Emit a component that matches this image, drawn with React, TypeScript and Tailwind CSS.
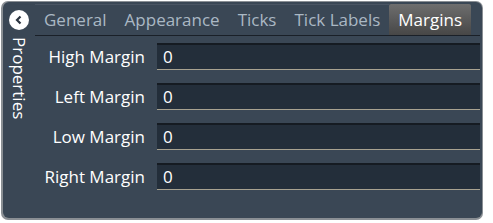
import React from 'react';

const tabs = ['General', 'Appearance', 'Ticks', 'Tick Labels', 'Margins'];
const rows = ['High Margin', 'Left Margin', 'Low Margin', 'Right Margin'];

const App: React.FC = () => {
  return (
    <div className="w-[493px] h-[223px] bg-white" style={{ fontFamily: '"Open Sans", "Noto Sans", sans-serif' }}>
      <div className="ml-[1px] mt-[1px] w-[482px] h-[219px] rounded-[7px] bg-[#8a8f94] pl-[2px] pb-[2px] pt-[1px] pr-[1px]">
        <div className="flex h-full w-full rounded-[6px] bg-[#3a4755]">
          {/* side strip */}
          <div className="flex w-[32px] flex-col items-center pt-[8px]">
            <div className="flex h-[20px] w-[20px] items-center justify-center rounded-full bg-white">
              <svg width="10" height="10" viewBox="0 0 10 10">
                <path d="M6.5 1.5 L3 5 L6.5 8.5" fill="none" stroke="#2b3440" strokeWidth="2.2" />
              </svg>
            </div>
            <div className="mt-[7px] text-[17px] leading-none text-white [writing-mode:vertical-rl]">Properties</div>
          </div>
          {/* main */}
          <div className="flex flex-1 flex-col pr-[2px]">
            <div className="mt-[2px] flex h-[32px] border-b border-[#1a2028]">
              {tabs.map((t) => (
                <div
                  key={t}
                  className={
                    t === 'Margins'
                      ? 'flex items-center rounded-t-[2px] bg-gradient-to-b from-[#6e6e6e] to-[#474747] px-[9px] text-[17px] text-white'
                      : 'flex items-center border-t border-[#4a5563] px-[9px] text-[17px] text-[#aab8c4]'
                  }
                >
                  {t}
                </div>
              ))}
            </div>
            <div className="flex flex-col gap-[13px] pt-[7px]">
              {rows.map((r) => (
                <div key={r} className="flex items-center">
                  <div className="w-[122px] shrink-0 pr-[12px] text-right text-[17px] whitespace-nowrap text-white">{r}</div>
                  <div className="flex h-[27px] flex-1 items-center border-t-2 border-b border-t-[#151b22] border-b-[#a8a290] bg-[#232e3a] pl-[6px] text-[17px] text-white">
                    0
                  </div>
                </div>
              ))}
            </div>
          </div>
        </div>
      </div>
    </div>
  );
};

export default App;
